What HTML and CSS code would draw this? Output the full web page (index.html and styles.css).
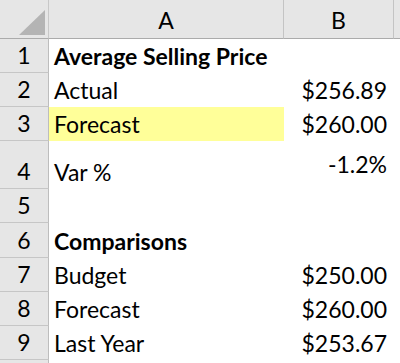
FILE: index.html
```html
<!DOCTYPE html>
<html>
<head>
<meta charset="utf-8">
<link rel="stylesheet" href="styles.css">
</head>
<body>
<div class="sheet">
  <div class="corner"><svg width="48" height="38" viewBox="0 0 48 38"><polygon points="45,10 45,35 19,35" fill="#b4b4b4"/></svg></div>
  <div class="colhead">A</div>
  <div class="colhead">B</div>
  <div class="colhead last"></div>

  <div class="rowhead">1</div><div class="cell bold">Average Selling Price</div><div class="cell num"></div><div class="pad"></div>
  <div class="rowhead">2</div><div class="cell">Actual</div><div class="cell num">$256.89</div><div class="pad"></div>
  <div class="rowhead">3</div><div class="cell fill">Forecast</div><div class="cell num">$260.00</div><div class="pad"></div>
  <div class="rowhead">4</div><div class="cell">Var %</div><div class="cell num raised">-1.2%</div><div class="pad"></div>
  <div class="rowhead">5</div><div class="cell"></div><div class="cell num"></div><div class="pad"></div>
  <div class="rowhead">6</div><div class="cell bold">Comparisons</div><div class="cell num"></div><div class="pad"></div>
  <div class="rowhead">7</div><div class="cell">Budget</div><div class="cell num">$250.00</div><div class="pad"></div>
  <div class="rowhead">8</div><div class="cell">Forecast</div><div class="cell num">$260.00</div><div class="pad"></div>
  <div class="rowhead">9</div><div class="cell">Last Year</div><div class="cell num">$253.67</div><div class="pad"></div>
  <div class="rowhead"></div><div class="cell"></div><div class="cell num"></div><div class="pad"></div>
</div>
</body>
</html>
```

FILE: styles.css
```css
html, body {
  margin: 0;
  padding: 0;
  background: #ffffff;
}
.sheet {
  display: grid;
  grid-template-columns: 49px 235px 110px 6px;
  grid-template-rows: 39px 34px 34px 34px 48px 34px 35px 34px 34px 34px 10px;
  width: 400px;
  height: 363px;
  overflow: hidden;
  font-family: Lato, "Open Sans", sans-serif;
  font-size: 23px;
  color: #000000;
}
.sheet > div {
  box-sizing: border-box;
}
.corner {
  background: #e6e6e6;
  border-right: 1px solid #c8c8c8;
  border-bottom: 1px solid #ababab;
  line-height: 0;
}
.colhead {
  background: #e6e6e6;
  border-right: 1px solid #c4c4c4;
  border-bottom: 1px solid #ababab;
  display: flex;
  align-items: flex-end;
  justify-content: center;
  padding-bottom: 4px;
}
.colhead.last {
  border-right: none;
}
.rowhead {
  background: #e6e6e6;
  border-right: 1px solid #bdbdbd;
  border-bottom: 1px solid #c6c6c6;
  display: flex;
  align-items: flex-end;
  justify-content: center;
  padding-bottom: 3px;
}
.cell {
  display: flex;
  align-items: flex-end;
  padding: 0 5px 3px 5px;
  white-space: nowrap;
}
.cell.num {
  justify-content: flex-end;
  padding-right: 7px;
}
.cell.bold {
  font-weight: 700;
}
.cell.fill {
  background: #ffff99;
}
.cell.raised {
  padding-bottom: 11px;
}
.pad {
  background: #ffffff;
}
```
